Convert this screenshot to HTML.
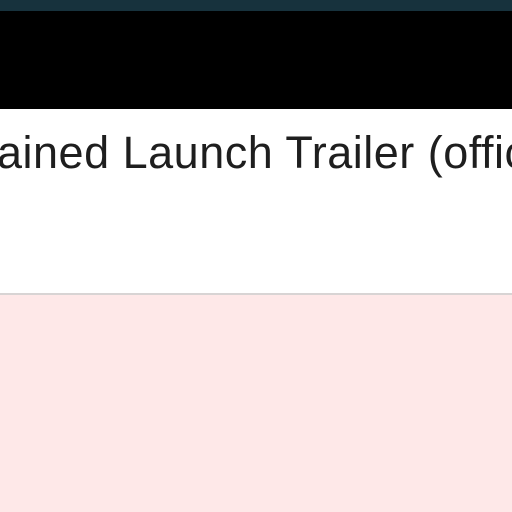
<!DOCTYPE html>
<html><head><style>
body{margin:0;width:512px;height:512px;overflow:hidden;background:#fee8e8;position:relative;font-family:"Liberation Sans",sans-serif}
.t{position:absolute;left:0;top:0;width:512px;height:11px;background:#17323d}
.b{position:absolute;left:0;top:11px;width:512px;height:98px;background:#000}
.w{position:absolute;left:0;top:109px;width:512px;height:184px;background:#fff;border-bottom:2px solid #d8d4d4;overflow:hidden}
.x{position:absolute;left:-3px;top:18px;font-size:45px;color:#1e1e1e;white-space:nowrap;letter-spacing:0.5px}
</style></head><body>
<div class="t"></div><div class="b"></div><div class="w"><div class="x">ained Launch Trailer (offic</div></div>
</body></html>
